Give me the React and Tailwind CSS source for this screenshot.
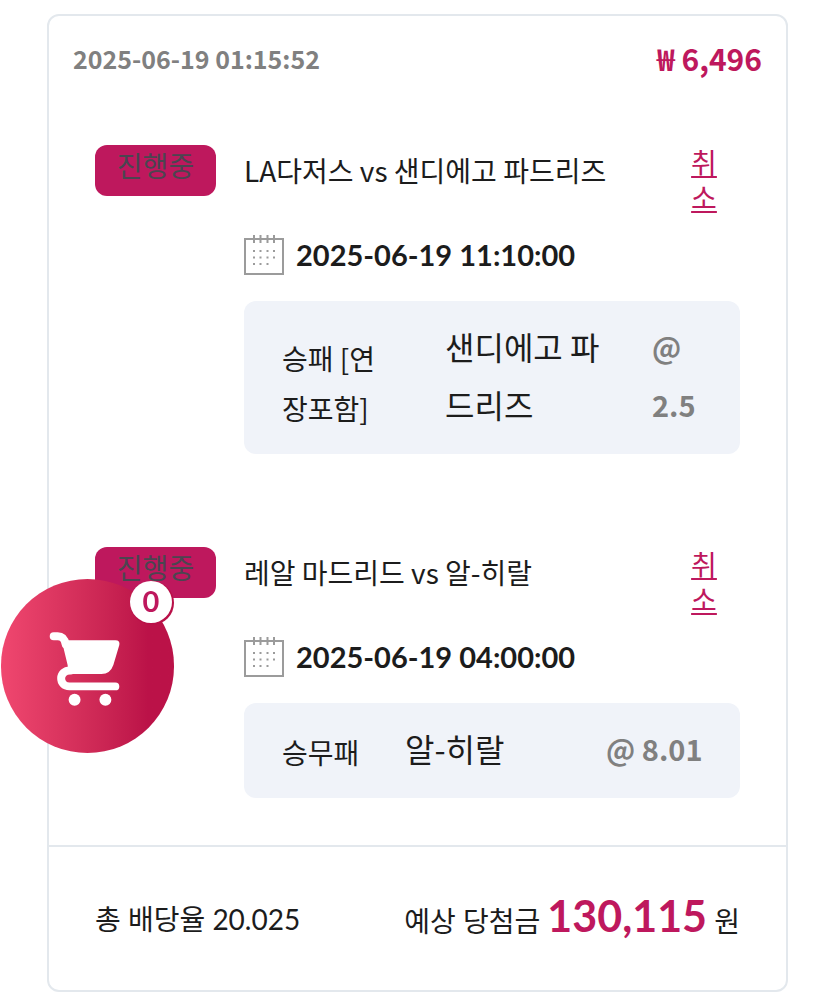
// src/pages/BetHistoryPage.js
import React, { useState } from 'react';

const bets = [
  {
    id: 1,
    status: '진행중',
    match: 'LA다저스 vs 샌디에고 파드리즈',
    date: '2025-06-19 11:10:00',
    market: '승패 [연장포함]',
    pick: '샌디에고 파드리즈',
    odds: '@ 2.5',
    columns: 'grid-cols-[163px_1fr_58px]',
  },
  {
    id: 2,
    status: '진행중',
    match: '레알 마드리드 vs 알-히랄',
    date: '2025-06-19 04:00:00',
    market: '승무패',
    pick: '알-히랄',
    odds: '@ 8.01',
    columns: 'grid-cols-[123px_1fr_104px]',
  },
];

const CalendarIcon = () => (
  <svg className="w-10 h-10 shrink-0" viewBox="0 0 40 40" fill="none" stroke="#9b9b9b" aria-hidden="true">
    <rect x="1" y="4" width="38" height="35" strokeWidth="2" />
    <path d="M10 0v8M16.5 0v8M23.5 0v8M30 0v8" strokeWidth="2" />
    <path d="M9 16h2M15.5 16h2M22.5 16h2M29 16h2M9 22.5h2M15.5 22.5h2M22.5 22.5h2M29 22.5h2M9 29h2M15.5 29h2M22.5 29h2" strokeWidth="2" />
  </svg>
);

const CartIcon = () => (
  <svg className="w-full h-full" viewBox="0 0 174 174" fill="#fff" aria-hidden="true">
    <path d="M53 57H57C62 57 64 60 65 65" fill="none" stroke="#fff" strokeWidth="8" strokeLinecap="round" />
    <path d="M61 61H115Q120 61 119 66L113 86Q110 95 101 95H68L67 86Z" />
    <path d="M70 91.500C57.500 91 57.500 107.500 69 107.500H115" fill="none" stroke="#fff" strokeWidth="8" strokeLinecap="round" />
    <circle cx="74" cy="121" r="6" />
    <circle cx="105" cy="121" r="6" />
  </svg>
);

const BetRow = ({ bet, onCancel }) => (
  <li className="grid grid-cols-[121px_1fr] gap-x-7">
    <span className="h-[51px] rounded-xl bg-[#be185d] text-center text-[28px] leading-10 text-[#4b4550]">
      {bet.status}
    </span>
    <div>
      <div className="flex justify-between items-start h-[72px]">
        <h2 className="text-[28px] leading-[50px]">{bet.match}</h2>
        <button onClick={() => onCancel(bet.id)} className="w-7 mr-[22px] text-[28px] leading-[35px] text-[#be185d] underline">
          취소
        </button>
      </div>
      <div className="mt-[18px] flex items-center gap-3">
        <CalendarIcon />
        <time className="font-['Lato','Noto_Sans_CJK_KR',sans-serif] font-bold text-[29px] leading-10">{bet.date}</time>
      </div>
      <div className={`mt-[26px] grid items-end rounded-xl bg-[#f0f3f9] pl-[38px] pr-[30px] pt-4 pb-[21px] ${bet.columns}`}>
        <span className="pr-[45px] text-[28px] leading-[50px]">{bet.market}</span>
        <span className="pr-10 text-[32px] leading-[58px]">{bet.pick}</span>
        <span className="text-[29px] leading-[58px] font-bold text-[#808080]">{bet.odds}</span>
      </div>
    </div>
  </li>
);

const BetHistoryPage = () => {
  const [items, setItems] = useState(bets);
  const [cartCount] = useState(0);

  const handleCancel = (id) => {
    setItems(items.filter((b) => b.id !== id));
  };

  return (
    <div className="bg-white px-[47px] pt-3.5 pb-2.5 font-['Noto_Sans_CJK_KR',sans-serif] text-[#1c1c1c]">
      <section className="rounded-xl border-2 border-[#e3e8ed]">
        <header className="flex items-center justify-between px-6 pt-5 leading-[44px] font-bold">
          <time className="text-[25px] text-[#808080]">2025-06-19 01:15:52</time>
          <span className="text-[30px] text-[#be185d]">₩ 6,496</span>
        </header>

        <ul className="flex flex-col gap-[93px] px-[46px] pt-[65px] pb-[47px]">
          {items.map((bet) => (
            <BetRow key={bet.id} bet={bet} onCancel={handleCancel} />
          ))}
        </ul>

        <footer className="flex items-center justify-between border-t-2 border-[#e3e8ed] px-[46px] py-[38px] text-[28px] leading-[62px] font-['Lato','Noto_Sans_CJK_KR',sans-serif]">
          <span>총 배당율 20.025</span>
          <span>
            예상 당첨금 <strong className="text-[43px] font-bold text-[#be185d]">130,115</strong> 원
          </span>
        </footer>
      </section>

      {/* Floating bet cart */}
      <button
        aria-label="Cart"
        className="fixed left-px top-[579px] w-[173px] h-[174px] rounded-full bg-linear-to-r from-[#f0476f] to-[#bb1248] to-85%"
      >
        <CartIcon />
        <span className="absolute right-0.5 top-0.5 w-[42px] h-[42px] rounded-full bg-white font-['Lato',sans-serif] text-[29px] leading-10 font-bold text-[#be185d] shadow-[1px_1px_0_1px_#b91048]">
          {cartCount}
        </span>
      </button>
    </div>
  );
};

export default BetHistoryPage;
